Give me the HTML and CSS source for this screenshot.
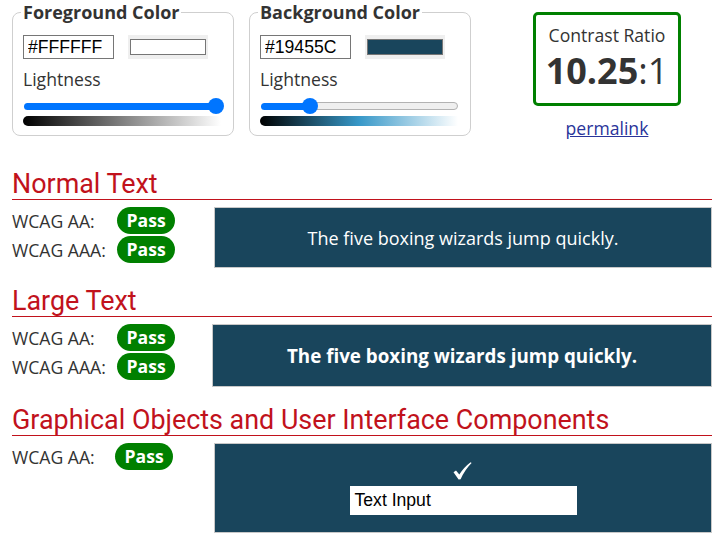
FILE: index.html
```html
<!DOCTYPE html>
<html lang="en">
<head>
<meta charset="utf-8">
<title>Contrast Checker</title>
<link rel="stylesheet" href="styles.css">
</head>
<body>
<div class="page">
  <div class="top">
    <fieldset class="picker">
      <legend>Foreground Color</legend>
      <div class="hex-row">
        <input class="hex" type="text" value="#FFFFFF">
        <span class="swatch"><span class="swatch-inner swatch-fg"></span></span>
      </div>
      <div class="label">Lightness</div>
      <div class="slider">
        <span class="fill" style="width:192px"></span>
        <span class="thumb"></span>
      </div>
      <div class="grad grad-fg"></div>
    </fieldset>
    <fieldset class="picker">
      <legend>Background Color</legend>
      <div class="hex-row">
        <input class="hex" type="text" value="#19455C">
        <span class="swatch"><span class="swatch-inner swatch-bg"></span></span>
      </div>
      <div class="label">Lightness</div>
      <div class="slider">
        <span class="fill" style="width:49px"></span>
        <span class="thumb"></span>
        <span class="rest"></span>
      </div>
      <div class="grad grad-bg"></div>
    </fieldset>
    <div class="ratio-col">
      <div class="ratio-box">
        <div class="ratio-title">Contrast Ratio</div>
        <div class="ratio-value"><b>10.25</b>:1</div>
      </div>
      <a class="permalink" href="#">permalink</a>
    </div>
  </div>

  <section class="result">
    <h2>Normal Text</h2>
    <div class="result-body">
      <div class="checks">
        <div class="check"><span class="level">WCAG AA:</span><span class="pass">Pass</span></div>
        <div class="check"><span class="level">WCAG AAA:</span><span class="pass">Pass</span></div>
      </div>
      <div class="sample sample-normal">The five boxing wizards jump quickly.</div>
    </div>
  </section>

  <section class="result">
    <h2>Large Text</h2>
    <div class="result-body">
      <div class="checks checks-large">
        <div class="check"><span class="level">WCAG AA:</span><span class="pass">Pass</span></div>
        <div class="check"><span class="level">WCAG AAA:</span><span class="pass">Pass</span></div>
      </div>
      <div class="sample sample-large">The five boxing wizards jump quickly.</div>
    </div>
  </section>

  <section class="result">
    <h2>Graphical Objects and User Interface Components</h2>
    <div class="result-body">
      <div class="checks">
        <div class="check"><span class="level level-short">WCAG AA:</span><span class="pass">Pass</span></div>
      </div>
      <div class="sample sample-ui">
        <svg class="tick" width="19" height="18" viewBox="0 0 19 18" aria-hidden="true">
          <path d="M0.5 10.2 L3 8.6 L6.3 12.6 Q10.5 5.5 17.6 0.2 L18.6 1 Q12 7.5 7.6 17.2 L5.6 17.4 Z" fill="#ffffff"/>
        </svg>
        <div class="text-input">Text Input</div>
      </div>
    </div>
  </section>
</div>
</body>
</html>
```

FILE: styles.css
```css
html, body {
  margin: 0;
  padding: 0;
  background: #ffffff;
}

body {
  font-family: "Open Sans", "DejaVu Sans", sans-serif;
  font-size: 17.6px;
  line-height: 24px;
  color: #333333;
}

.page {
  width: 700px;
  padding: 0 14px 0 12px;
}

/* ---------- top row ---------- */
.top {
  display: flex;
  align-items: flex-start;
}

.picker {
  box-sizing: border-box;
  width: 222px;
  margin: 0 15px 0 0;
  padding: 0 10px 9px 10px;
  border: 1px solid #cfcfcf;
  border-radius: 8px;
  min-inline-size: 0;
}

.picker legend {
  padding: 0 2px;
  margin-left: -2px;
  font-weight: 700;
  font-size: 18px;
  line-height: 24px;
  color: #333333;
}

.hex-row {
  display: flex;
  align-items: flex-start;
  margin-top: 11px;
}

.hex {
  box-sizing: border-box;
  width: 91px;
  height: 24px;
  margin: 0;
  padding: 0 4px;
  border: 1px solid #767676;
  border-radius: 0;
  font-family: "Liberation Sans", Arial, sans-serif;
  font-size: 17.6px;
  color: #000000;
  background: #ffffff;
}

.swatch {
  box-sizing: border-box;
  display: flex;
  width: 80px;
  height: 24px;
  margin-left: 14px;
  padding: 4px 2px;
  background: #efefef;
}

.swatch-inner {
  flex: 1;
  border: 1px solid #767676;
}

.swatch-fg { background: #ffffff; }
.swatch-bg { background: #19455c; }

.label {
  margin-top: 8px;
}

.slider {
  display: flex;
  align-items: center;
  height: 16px;
  margin-top: 7px;
  padding-left: 1px;
}

.fill {
  flex: none;
  height: 7px;
  margin-right: -8px;
  border-radius: 4px 0 0 4px;
  background: #0075ff;
}

.thumb {
  position: relative;
  z-index: 1;
  flex: none;
  width: 16px;
  height: 16px;
  border-radius: 50%;
  background: #0075ff;
}

.rest {
  box-sizing: border-box;
  flex: none;
  width: 148px;
  height: 8px;
  margin-left: -8px;
  border: 1px solid #b2b2b2;
  border-radius: 0 4px 4px 0;
  background: #efefef;
}

.grad {
  width: 198px;
  height: 10px;
  margin-top: 2px;
  border-radius: 5px 0 0 5px;
}

.grad-fg {
  background: linear-gradient(to right, #000000, #ffffff);
}

.grad-bg {
  background: linear-gradient(to right, hsl(200, 57%, 0%), hsl(200, 57%, 24%) 24%, hsl(200, 57%, 50%) 50%, hsl(200, 57%, 100%));
}

.ratio-col {
  display: flex;
  flex-direction: column;
  align-items: center;
  width: 148px;
  margin-left: 47px;
  padding-top: 12px;
}

.ratio-box {
  box-sizing: border-box;
  width: 148px;
  height: 94px;
  padding-top: 8px;
  border: 3px solid #008000;
  border-radius: 5px;
  text-align: center;
}

.ratio-title {
  line-height: 24px;
}

.ratio-value {
  margin-top: 4px;
  font-size: 36px;
  line-height: 40px;
  font-weight: 400;
}

.ratio-value b {
  font-weight: 700;
}

.permalink {
  margin-top: 10px;
  color: #29349a;
  text-decoration: underline;
}

/* ---------- results ---------- */
.result {
  margin-top: 29px;
}

.result + .result {
  margin-top: 18px;
}

.result h2 {
  margin: 0 0 7px 0;
  font-family: Roboto, "Noto Sans", sans-serif;
  font-weight: 400;
  font-size: 26.9px;
  line-height: 30px;
  color: #c1121c;
  border-bottom: 1px solid #c1121c;
}

.result-body {
  display: flex;
  align-items: flex-start;
}

.checks {
  flex: none;
  width: 202px;
}

.checks-large {
  width: 200px;
}

.check {
  display: flex;
  align-items: center;
  margin-bottom: 2px;
}

.level {
  width: 105px;
}

.level-short {
  width: 103px;
}

.pass {
  height: 27px;
  padding: 0 9.5px;
  border-radius: 14px;
  background: #008000;
  color: #ffffff;
  font-weight: 700;
  line-height: 27px;
}

.sample {
  box-sizing: border-box;
  flex: 1;
  display: flex;
  align-items: center;
  justify-content: center;
  border: 1px solid #c8c8c8;
  background: #19455c;
  color: #ffffff;
}

.sample-normal {
  height: 61px;
  font-size: 18px;
}

.sample-large {
  height: 63px;
  font-weight: 700;
  font-size: 18.8px;
}

.sample-ui {
  height: 90px;
  flex-direction: column;
  gap: 6px;
}

.tick {
  display: block;
  margin-right: 1px;
}

.text-input {
  box-sizing: border-box;
  width: 227px;
  height: 29px;
  padding-left: 5px;
  background: #ffffff;
  color: #000000;
  font-family: "Liberation Sans", Arial, sans-serif;
  font-size: 17.6px;
  line-height: 29px;
}
```
